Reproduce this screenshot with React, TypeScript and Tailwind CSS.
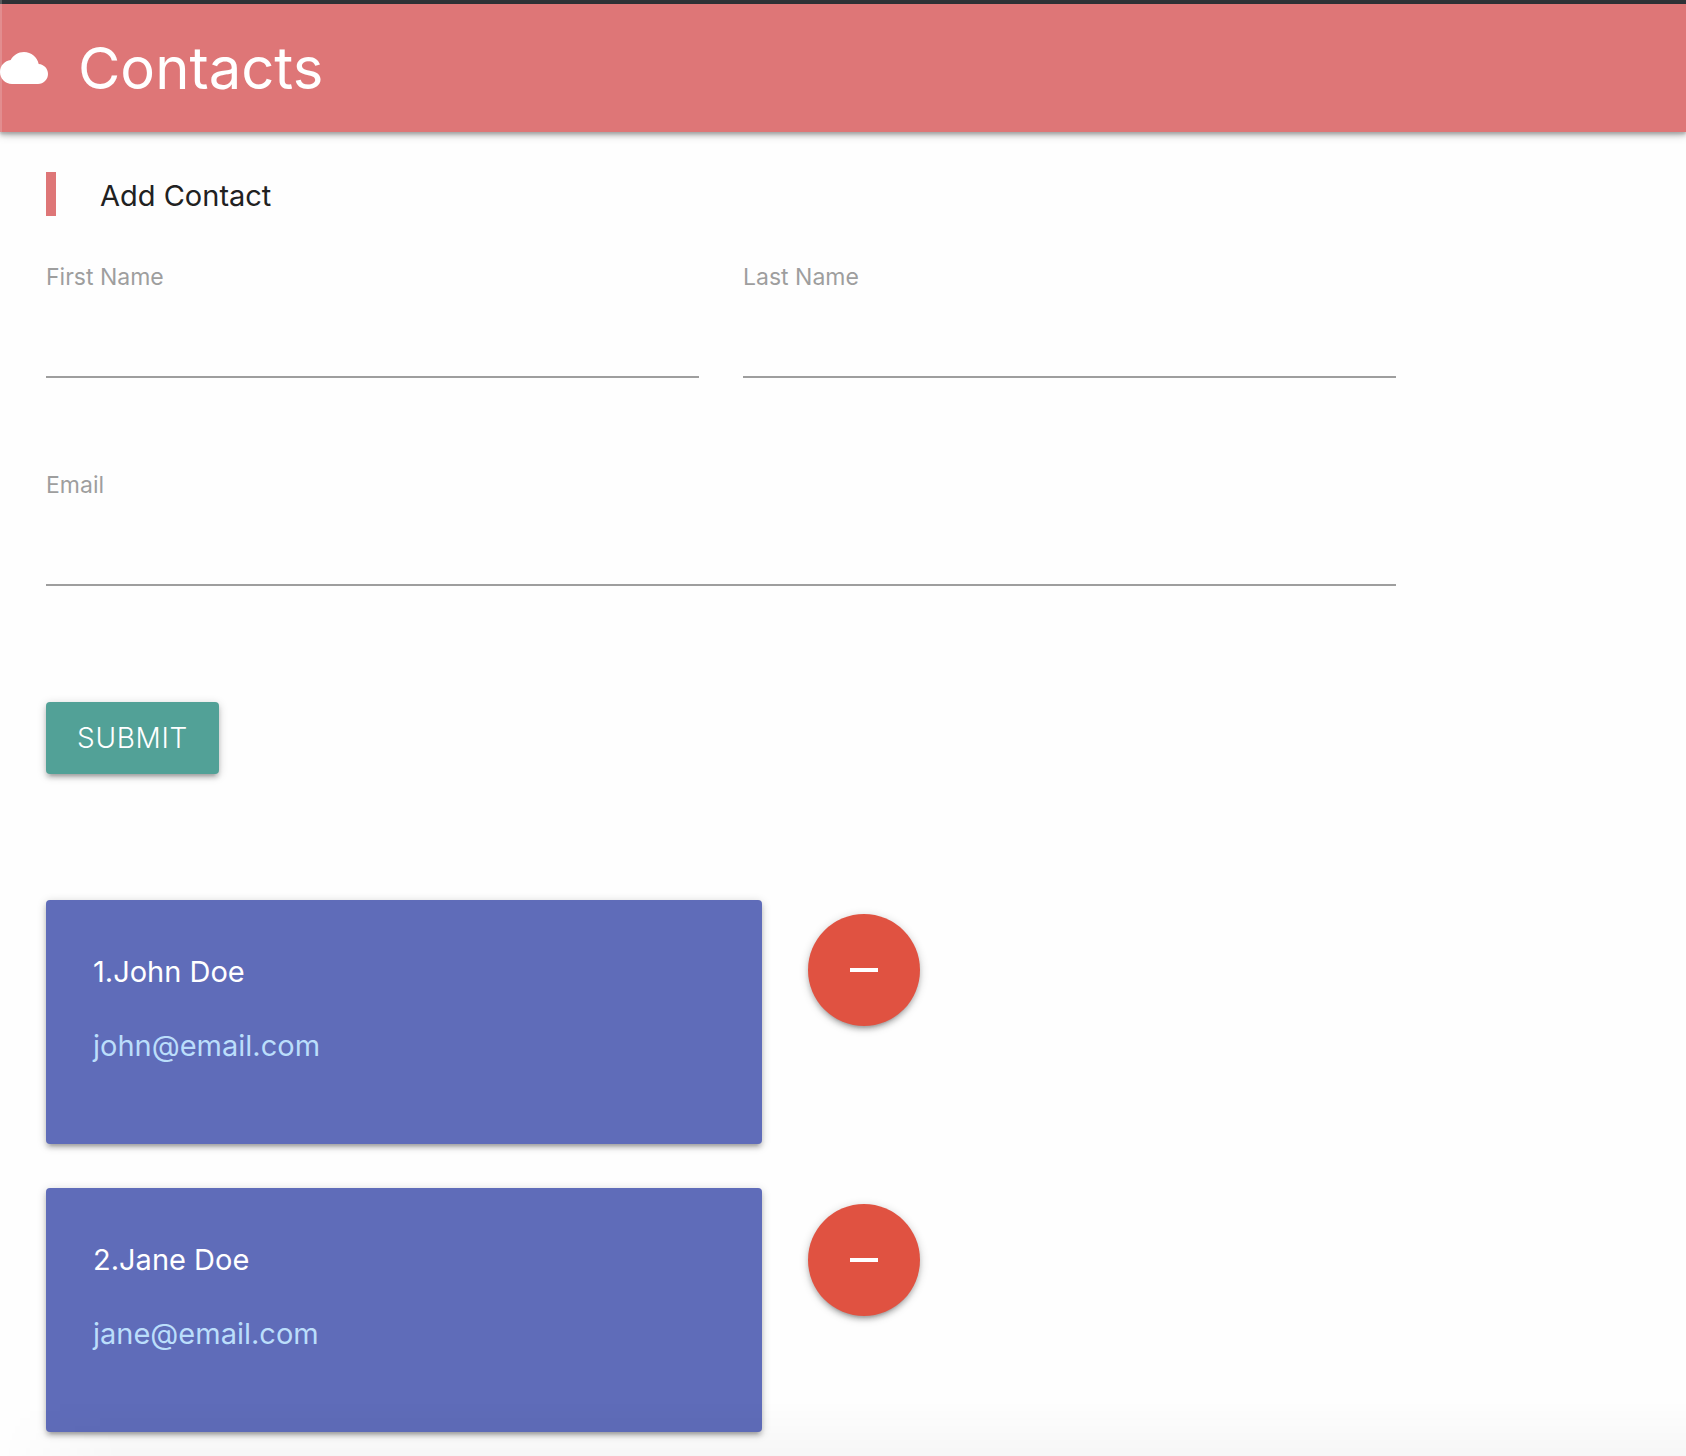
import { useState } from "react";

type Contact = { id: number; name: string; email: string };

const initialContacts: Contact[] = [
  { id: 1, name: "John Doe", email: "john@email.com" },
  { id: 2, name: "Jane Doe", email: "jane@email.com" },
];

function CloudIcon() {
  return (
    <svg className="size-12 shrink-0" viewBox="0 0 24 24" fill="currentColor" aria-hidden="true">
      <path d="M19.35 10.04C18.67 6.59 15.64 4 12 4 9.11 4 6.6 5.64 5.35 8.04 2.34 8.36 0 10.91 0 14c0 3.31 2.69 6 6 6h13c2.76 0 5-2.24 5-5 0-2.64-2.05-4.78-4.65-4.96z" />
    </svg>
  );
}

function Field({ id, label, type = "text", className = "" }: { id: string; label: string; type?: string; className?: string }) {
  return (
    <div className={`flex flex-col ${className}`}>
      <label htmlFor={id} className="text-[23px] leading-8 text-[#9e9e9e]">
        {label}
      </label>
      <input
        id={id}
        name={id}
        type={type}
        className="h-[85px] w-full border-b-2 border-[#9e9e9e] bg-transparent pt-6 text-[29px] outline-none focus:border-[#52a197]"
      />
    </div>
  );
}

export default function App() {
  const [contacts, setContacts] = useState(initialContacts);

  return (
    <div className="min-h-screen bg-[#fefefe] font-['Inter',sans-serif] text-[#212121]">
      <div className="h-1 border-l-2 border-[#5c5f62] bg-[#303438]" />
      <header className="flex h-32 items-center border-l-2 border-[#e28d8f] bg-[#de7677] text-white shadow-[0_4px_4px_0_rgba(0,0,0,0.14),0_2px_2px_0_rgba(0,0,0,0.12),0_2px_10px_0_rgba(0,0,0,0.2)]">
        <div className="-ml-0.5 flex items-center gap-[30px]">
          <CloudIcon />
          <h1 className="text-[58px] leading-[64px]">Contacts</h1>
        </div>
      </header>

      <main className="px-[46px] pt-10 pb-6">
        <h2 className="border-l-[10px] border-[#de7677] pt-1 pl-11 text-[29px] leading-10">Add Contact</h2>

        <form className="max-w-[1350px]" onSubmit={(e) => e.preventDefault()}>
          <div className="grid grid-cols-2 gap-x-11 gap-y-[91px] pt-[45px]">
            <Field id="firstName" label="First Name" />
            <Field id="lastName" label="Last Name" />
            <Field id="email" label="Email" type="email" className="col-span-2" />
          </div>
          <button
            type="submit"
            className="mt-[116px] h-[72px] cursor-pointer rounded-sm bg-[#52a197] px-[31px] text-[28px] font-light tracking-wide text-white uppercase shadow-[0_4px_4px_0_rgba(0,0,0,0.14),0_6px_2px_-4px_rgba(0,0,0,0.12),0_2px_10px_0_rgba(0,0,0,0.2)]"
          >
            Submit
          </button>
        </form>

        <section aria-label="Contacts" className="mt-[126px] flex gap-[46px]">
          <ul className="flex w-[716px] flex-col gap-11">
            {contacts.map((c) => (
              <li
                key={c.id}
                className="h-[244px] rounded-sm bg-[#5f6cb9] px-[47px] pt-[50px] text-[29px] leading-[44px] shadow-[0_4px_4px_0_rgba(0,0,0,0.14),0_6px_2px_-4px_rgba(0,0,0,0.12),0_2px_10px_0_rgba(0,0,0,0.2)]"
              >
                <p className="text-white">
                  {c.id}.{c.name}
                </p>
                <a href={`mailto:${c.email}`} className="mt-[30px] block text-[#bbdefb]">
                  {c.email}
                </a>
              </li>
            ))}
          </ul>
          <div className="flex flex-col gap-[178px] pt-3.5">
            {contacts.map((c) => (
              <button
                key={c.id}
                type="button"
                aria-label={`Remove ${c.name}`}
                onClick={() => setContacts(contacts.filter((o) => o.id !== c.id))}
                className="flex size-28 cursor-pointer items-center justify-center rounded-full bg-[#e05241] text-white shadow-[0_4px_4px_0_rgba(0,0,0,0.14),0_6px_2px_-4px_rgba(0,0,0,0.12),0_2px_10px_0_rgba(0,0,0,0.2)]"
              >
                <svg className="size-12" viewBox="0 0 24 24" fill="currentColor" aria-hidden="true">
                  <path d="M19 13H5v-2h14v2z" />
                </svg>
              </button>
            ))}
          </div>
        </section>
      </main>

      <div className="pointer-events-none fixed inset-x-0 bottom-0 h-14 bg-linear-to-b from-transparent to-black/3 [mask-image:linear-gradient(to_right,transparent,black_120px)]" />
    </div>
  );
}
